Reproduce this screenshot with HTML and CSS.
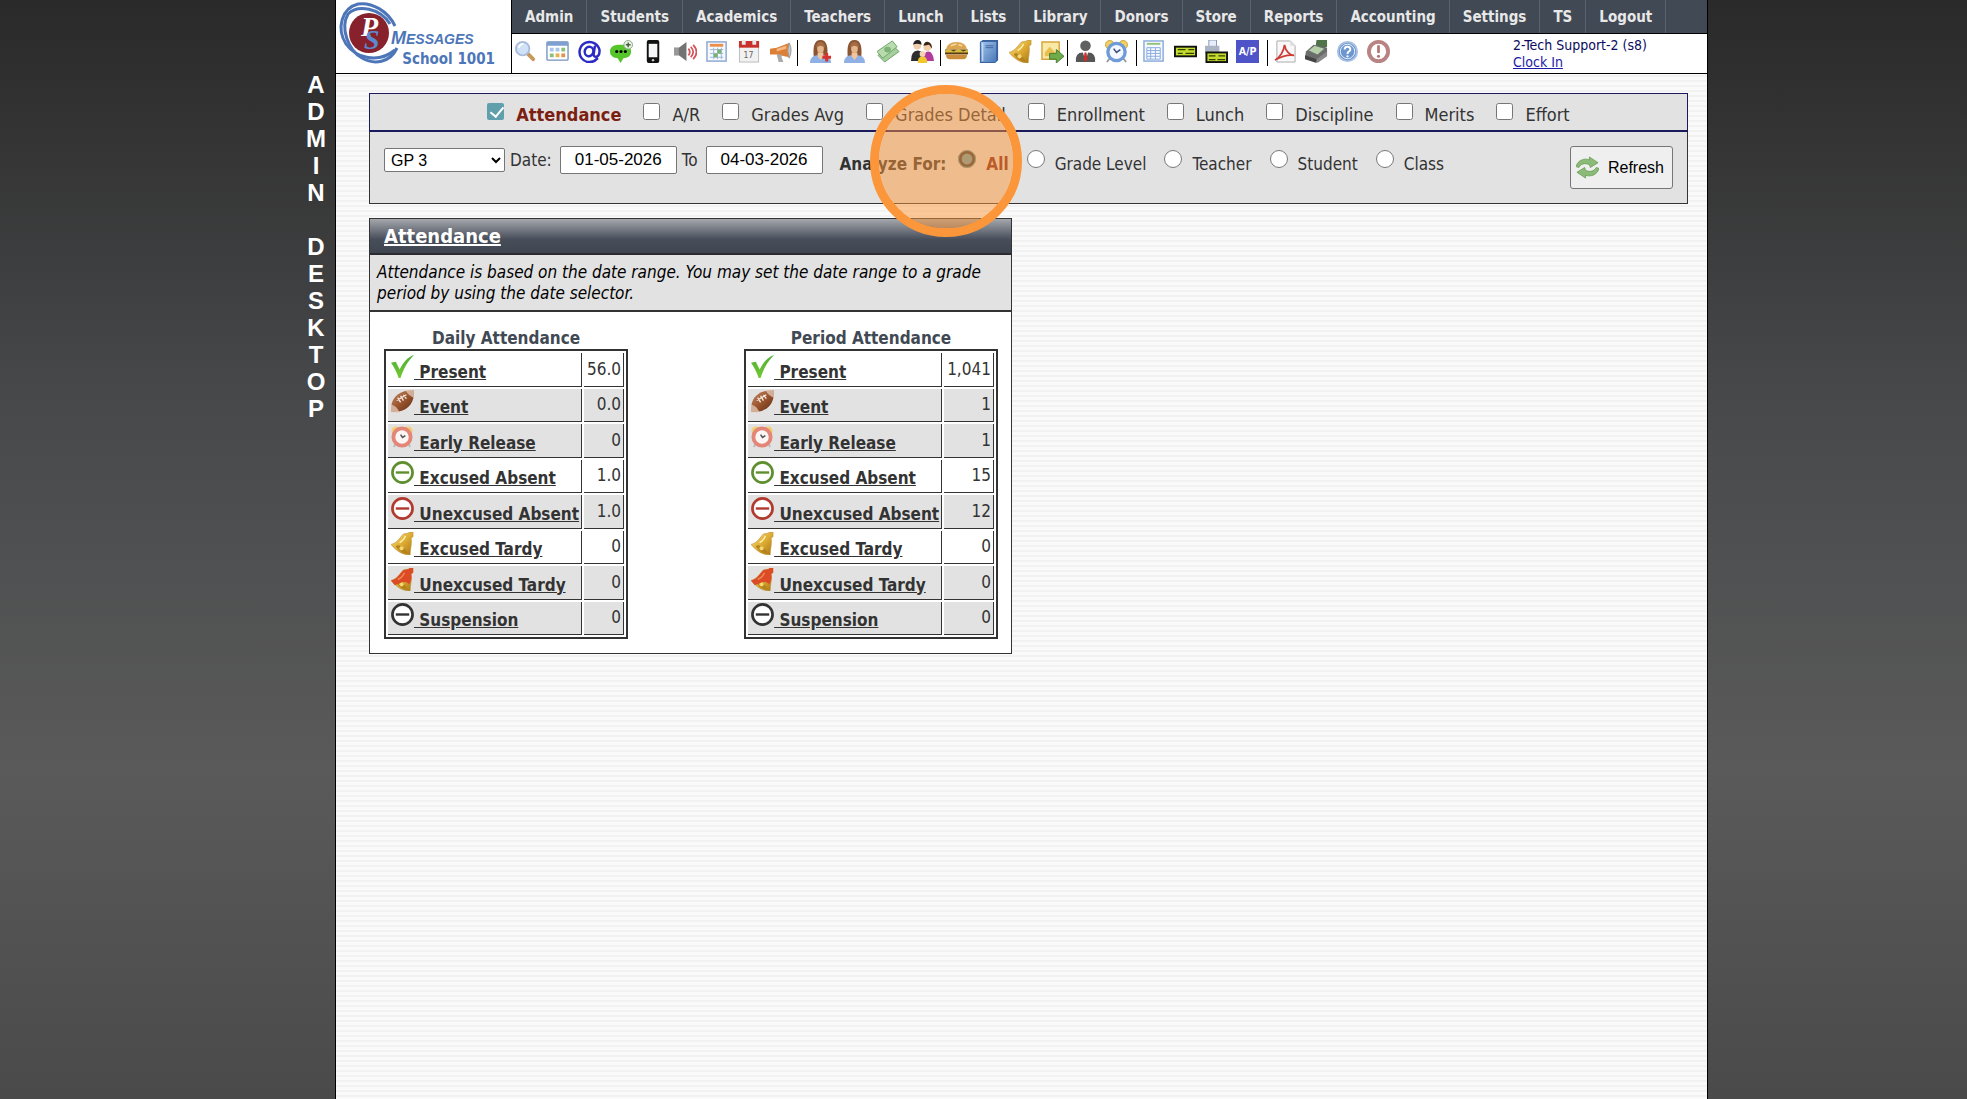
FILE: index.html
```
<!DOCTYPE html>
<html lang="en">
<head>
    <meta charset="UTF-8">
    <meta name="viewport" content="width=device-width, initial-scale=1.0">
    <title>Admin Desktop</title>
    <link rel="stylesheet" href="styles.css">
</head>
<body>
    <!-- icon sprite -->
    <svg width="0" height="0" class="sprite" aria-hidden="true">
        <defs>
            <linearGradient id="gold" x1="0" y1="0" x2="1" y2="1"><stop offset="0" stop-color="#f7e08a"/><stop offset="0.5" stop-color="#e0ae35"/><stop offset="1" stop-color="#a87512"/></linearGradient>
            <linearGradient id="blue" x1="0" y1="0" x2="1" y2="1"><stop offset="0" stop-color="#9fc3ea"/><stop offset="1" stop-color="#4a78b8"/></linearGradient>
            <linearGradient id="brown" x1="0" y1="0" x2="1" y2="1"><stop offset="0" stop-color="#c98f6c"/><stop offset="0.5" stop-color="#9a552e"/><stop offset="1" stop-color="#5e2c14"/></linearGradient>
            <linearGradient id="leaf" x1="0" y1="0" x2="0" y2="1"><stop offset="0" stop-color="#4fae35"/><stop offset="1" stop-color="#74c832"/></linearGradient>
        </defs>
        <symbol id="i-search" viewBox="0 0 24 24"><path d="M14 14l6 6" stroke="#c79a5c" stroke-width="4" stroke-linecap="round"/><circle cx="9" cy="9" r="7" fill="#cfe2f7" stroke="#a9bddb" stroke-width="2"/><path d="M5 8q1-4 5-4" stroke="#fff" stroke-width="2" fill="none"/></symbol>
        <symbol id="i-grid" viewBox="0 0 24 24"><rect x="1" y="2" width="22" height="19" rx="1" fill="#fff" stroke="#7391c0" stroke-width="1.4"/><path d="M1 2h22v4H1z" fill="#7e9fd0"/><path d="M4 8h4v4H4zM10 8h4v4h-4z" fill="#a9c6ea"/><path d="M16 8h4v4h-4zM4 14h4v4H4z" fill="#8cc07a"/><path d="M10 14h4v4h-4z" fill="#eab04f"/><path d="M16 14h4v4h-4z" fill="#e0954e"/></symbol>
        <symbol id="i-at" viewBox="0 0 24 24"><g fill="none" stroke="#2c2cc4" stroke-width="2.6" stroke-linecap="round"><path d="M20 19.500A10.500 10.500 0 1 1 22.500 11c0 5-2 6.500-4 6.500s-2.500-1.500-2-4L17.500 7"/><ellipse cx="11.500" cy="12" rx="4.500" ry="5" transform="rotate(15 11.500 12)"/></g></symbol>
        <symbol id="i-chat" viewBox="0 0 24 24"><path d="M11 5c7 0 11 2 11 7s-4 7-8 7l-3 5-3-5c-4-.5-8-2-8-7s4-7 11-7z" fill="#56c52c"/><circle cx="7" cy="12" r="1.600"/><circle cx="11.500" cy="12" r="1.600"/><circle cx="16" cy="12" r="1.600"/><circle cx="19" cy="5" r="4.500" fill="#e8f3e2" stroke="#8aa583"/><path d="M19 2.500v5M16.500 5h5" stroke="#456040" stroke-width="1.500"/></symbol>
        <symbol id="i-phone" viewBox="0 0 24 24"><rect x="5" y="0" width="13" height="24" rx="2" fill="#111"/><rect x="7" y="4" width="9" height="14" fill="#f4f6f8"/><circle cx="11.500" cy="21" r="1.300" fill="#ccc"/></symbol>
        <symbol id="i-sound" viewBox="0 0 24 24"><path d="M0 8h5l8-6v20l-8-6H0z" fill="#737373"/><path d="M0 8h5v8H0z" fill="#999"/><path d="M15 9q3 3.500 0 7M17.500 7q5 5.500 0 11M20 5q7 7.500 0 15" fill="none" stroke="#d3545a" stroke-width="1.800"/></symbol>
        <symbol id="i-cal" viewBox="0 0 24 24"><rect x="1" y="2" width="20" height="20" fill="#f6f9fd" stroke="#8aa6d2" stroke-width="1.500"/><path d="M4 4h14v3H4z" fill="#ec8d4b"/><path d="M4 10h14M4 14h14M4 18h14M8 8v12M12 8v12M16 8v12" stroke="#9db4d8"/><path d="M12 10h4v4h-4zM8 14h4v4H8z" fill="#78b56a"/></symbol>
        <symbol id="i-date" viewBox="0 0 24 24"><rect x="1.500" y="2" width="20" height="21" fill="#f1f1f1" stroke="#bbb"/><path d="M1 1h21v7H1z" fill="#c9302c"/><path d="M4 0h4v5H4zM15 0h4v5h-4z" fill="#e8e8e8"/></symbol>
        <symbol id="i-horn" viewBox="0 0 24 24"><path d="M0 9l7-1 13-5v15L7 15H0z" fill="#dc7f35"/><path d="M20 3q4 7 0 16-3-8 0-16z" fill="#c6c6c6" stroke="#999"/><path d="M7 15h6l-1 3 2 5H9z" fill="#aaa"/><path d="M7 9l10-3v3L7 12z" fill="#f4b880"/></symbol>
        <symbol id="i-girl" viewBox="0 0 24 24"><path d="M5 18C4 8 5 0 12 0s8 8 7 18z" fill="#8b5534"/><path d="M1 24q0-7 7-8h8q7 1 7 8z" fill="#8fb0e4"/><path d="M9 13h6v4l-3 4-3-4z" fill="#f0c49c"/><ellipse cx="12" cy="9" rx="3.500" ry="4.500" fill="#e3b68c"/><path d="M7 8q1-6 5-6t5 6q-4-2-5-2T7 8z" fill="#a66c44"/></symbol>
        <symbol id="i-girl-add" viewBox="0 0 24 24"><use href="#i-girl"/><path d="M18.500 13.500v9M14 18h9" stroke="#d8302a" stroke-width="3"/></symbol>
        <symbol id="i-cash" viewBox="0 0 24 24"><path d="M1 16L17 6l6 6L8 23z" fill="#a6cf9d" stroke="#6ca268"/><path d="M0 12L16 1l5 6L6 19z" fill="#b8dcae" stroke="#6ca268"/><ellipse cx="11" cy="10" rx="3.500" ry="3" fill="#7fb277"/></symbol>
        <symbol id="i-family" viewBox="0 0 24 24"><path d="M0 22q0-11 7-11t7 11z" fill="#2e2e2e"/><circle cx="6.500" cy="6" r="4" fill="#f1cda9"/><path d="M2 5q1-5 5-5t4 5q-5-2-9 0z" fill="#222"/><path d="M13 22q0-10 5-10t6 10z" fill="#b53aa0"/><circle cx="17" cy="7.500" r="4" fill="#f1cda9"/><path d="M13 6q1-5 5-4 4 1 4 7l-3-4z" fill="#3a2418"/><path d="M7 24q0-7 5-7t5 7z" fill="#f1c730"/><circle cx="12" cy="14.500" r="3" fill="#f6d5b5"/></symbol>
        <symbol id="i-burger" viewBox="0 0 24 24"><path d="M1 10q1-8 11-8t11 8z" fill="#dba54f"/><path d="M0 10h24v5H0z" fill="#5a3a16"/><path d="M0 11l4-2 5 3 5-3 5 3 5-2v3H0z" fill="#d4bb3d"/><path d="M1 15h22q0 5-4 5H5q-4 0-4-5z" fill="#c98d3c"/><path d="M6 6l6-2M14 5l4 1" stroke="#f4dba4" stroke-width="1.500"/></symbol>
        <symbol id="i-book" viewBox="0 0 24 24"><path d="M3 2l3-2h16v21l-3 3H3z" fill="#3b62a0"/><rect x="4" y="2" width="16" height="21" fill="url(#blue)"/><path d="M6 3v19" stroke="#dce9f8"/><path d="M9 6h8M9 8h8" stroke="#41679f"/></symbol>
        <symbol id="i-bell" viewBox="0 0 24 24"><path d="M0 13C7 11 9 6 13 2l6-1V0h4v5l-2 1c1 7-1 11-1 18-8 0-14-4-20-11z" fill="url(#gold)" stroke="#b98c2c" stroke-width=".6"/><path d="M5 15q2-3 7 1t6 7q-8-1-13-8z" fill="#b3831f"/><circle cx="11" cy="17" r="2.200" fill="#f5d66f"/><path d="M9 11q5-3 6-7" stroke="#fff3b5" stroke-width="1.500" fill="none"/></symbol>
        <symbol id="i-bell-red" viewBox="0 0 24 24"><use href="#i-bell"/><path d="M0 13C7 11 9 6 13 2l6-1V0h4v5l-2 1c1 5 0 8-2 11-5-5-10-1-15 1z" fill="#dc4b25"/><path d="M7 12q5-2 7-7" stroke="#f08b55" stroke-width="1.500" fill="none"/></symbol>
        <symbol id="i-export" viewBox="0 0 24 24"><path d="M1 2h18v18H1z" fill="#f8e9a6" stroke="#d5a63c" stroke-width="1.500"/><path d="M4 13l5-6 6 6v4H4z" fill="#e9bf4f"/><path d="M9 14h7v-4l8 7-8 7v-4H9z" fill="#70ac4c" stroke="#437c2c"/></symbol>
        <symbol id="i-man" viewBox="0 0 24 24"><path d="M2 23q-1-10 7-10h6q8 0 7 10z" fill="#565656"/><circle cx="12" cy="6" r="5.500" fill="#606060"/><path d="M9 12l3 10 3-10z" fill="#fff"/><path d="M11 13h2l1 7-2 3-2-3z" fill="#cf2e28"/></symbol>
        <symbol id="i-clock" viewBox="0 0 24 24"><path d="M5 19l-3 4M19 19l3 4" stroke="#999" stroke-width="2"/><circle cx="5" cy="5" r="4.500" fill="#f1cf63" stroke="#cda43b"/><circle cx="19" cy="5" r="4.500" fill="#f1cf63" stroke="#cda43b"/><circle cx="12" cy="12.500" r="9" fill="#f5f9ff" stroke="#6f9bd8" stroke-width="3.500"/><path d="M9 9l3 4 4-3" fill="none" stroke="#36507c" stroke-width="1.600"/></symbol>
        <symbol id="i-clock-red" viewBox="0 0 24 24"><path d="M5 18l-2 4M18 18l2 4" stroke="#bbb" stroke-width="2"/><circle cx="5" cy="5" r="4.500" fill="#f1cf75"/><circle cx="18" cy="5" r="4.500" fill="#f1cf75"/><circle cx="11.500" cy="11.500" r="9" fill="#fbf6f3" stroke="#e38678" stroke-width="4"/><path d="M10 9l2 3 3-2" fill="none" stroke="#555" stroke-width="1.600"/></symbol>
        <symbol id="i-sheet" viewBox="0 0 24 24"><rect x="1" y="1" width="20" height="21" fill="#f5f9ff" stroke="#8aaadc" stroke-width="1.500"/><path d="M4 4h14" stroke="#93c37b" stroke-width="2"/><path d="M4 8h14M4 11h14M4 14h14M4 17h14M4 20h14M4 8v12M8 8v12M13 8v12M18 8v12" stroke="#8aaadc"/></symbol>
        <symbol id="i-check" viewBox="0 0 24 24"><rect x="1" y="7" width="22" height="10" fill="#c3dc2e" stroke="#111" stroke-width="2"/><path d="M4 10h8M4 14h5M15 10h6M12 14h9" stroke="#384000" stroke-width="1.200"/></symbol>
        <symbol id="i-check-print" viewBox="0 0 24 24"><path d="M4 0h8v7H4z" fill="#e6eef9" stroke="#8497b3"/><path d="M0 6h15v8H0z" fill="#aab4c2"/><rect x="1.500" y="13" width="21.500" height="10" fill="#c3dc2e" stroke="#111" stroke-width="2"/><path d="M4 16.500h7M4 20.500h7M14 16.500h7M13 20.500h8" stroke="#384000" stroke-width="1.200"/></symbol>
        <symbol id="i-pdf" viewBox="0 0 24 24"><path d="M3 1h14l5 5v17H3z" fill="#f8f8f8" stroke="#aaa"/><path d="M17 1v5h5z" fill="#ddd"/><path d="M1 21c5-3 9-9 10-16 1 7 6 11 10 11-7-1-13 1-20 5z" fill="none" stroke="#cd3c34" stroke-width="1.800"/></symbol>
        <symbol id="i-register" viewBox="0 0 24 24"><path d="M12 0h11v7l-4 2-8-2z" fill="#50734a"/><path d="M1 12L9 5l14 3v7l-10 8-13-5z" fill="#6a6d6c"/><path d="M4 11l6-5 10 3-7 6z" fill="#b8d0a9"/><path d="M0 16l12 4v4L0 20z" fill="#444"/><path d="M12 20l11-8v5l-10 7z" fill="#888"/></symbol>
        <symbol id="i-help" viewBox="0 0 24 24"><circle cx="12" cy="12" r="10" fill="#6d96cf" stroke="#a6bfe2" stroke-width="2"/><circle cx="12" cy="12" r="7.500" fill="none" stroke="#eef4fc"/><path d="M9 10q0-3 3-3t3 3q0 1.500-2 2.500-1 .5-1 2" fill="none" stroke="#fff" stroke-width="2"/><circle cx="12" cy="17" r="1.200" fill="#fff"/></symbol>
        <symbol id="i-alert" viewBox="0 0 24 24"><circle cx="12" cy="12" r="10" fill="#fff" stroke="#b98384" stroke-width="4"/><path d="M12 5.500v8" stroke="#b07475" stroke-width="2.800"/><circle cx="12" cy="17" r="1.600" fill="#b07475"/></symbol>
        <symbol id="i-tick" viewBox="0 0 24 24"><path d="M0 8l5-1 4 8C13 7 18 2 24 0 18 6 13 14 10 24H8C6 18 3 12 0 8z" fill="url(#leaf)"/></symbol>
        <symbol id="i-football" viewBox="0 0 24 24"><path d="M0 23C-1 9 7 0 24 0c1 14-7 24-24 23z" fill="url(#brown)"/><path d="M0 15q7 2 9 9H0zM15 0q3 6 9 8V0z" fill="#e9d4c6" opacity=".7"/><path d="M6 11L16 5M7 8l3 5M10 6l3 5M13 5l3 4" stroke="#f5e9df" stroke-width="1.400"/></symbol>
        <symbol id="i-minus" viewBox="0 0 24 24"><circle cx="12" cy="12" r="10.500" fill="#fff" stroke="currentColor" stroke-width="2.800"/><path d="M5 12h14" stroke="currentColor" stroke-width="2.500"/></symbol>
        <symbol id="i-refresh" viewBox="0 0 24 24"><path id="arrow" d="M0 11C2 4 9 2 14 4V1l9 6-8 5-1-3C9 7 5 8 3 12z" fill="#8cba78" stroke="#659b51" stroke-width=".8"/><use href="#arrow" transform="rotate(180 12 12)"/></symbol>
    </svg>

    <div class="wrapper">
        <div class="side-title">A
            D
            M
            I
            N

            D
            E
            S
            K
            T
            O
            P</div>
        <main class="desktop">
            <header class="header">
                <div class="logo">
                    <svg class="logo-mark" viewBox="0 0 145 70" aria-hidden="true">
                        <g fill="none" stroke="#4d76b8">
                            <path d="M59 26C52 11 36 2 22 4 6 8 0 28 10 44c10 14 32 20 49 6" stroke-width="3"/>
                            <path d="M54 24C44 8 22 4 12 14 4 28 12 50 26 58c12 7 28 5 35-10" stroke-width="3"/>
                        </g>
                        <circle cx="33" cy="33" r="20" fill="#87212b"/>
                        <text x="25" y="36" class="logo-p">P</text>
                        <text x="28" y="49" class="logo-s">S</text>
                        <text x="55" y="44" class="logo-text">M<tspan class="logo-small">ESSAGES</tspan></text>
                    </svg>
                    <div class="school">School 1001</div>
                </div>
                <div class="header-right">
                    <nav class="menu">
                        <a href="#">Admin</a>
                        <a href="#">Students</a>
                        <a href="#">Academics</a>
                        <a href="#">Teachers</a>
                        <a href="#">Lunch</a>
                        <a href="#">Lists</a>
                        <a href="#">Library</a>
                        <a href="#">Donors</a>
                        <a href="#">Store</a>
                        <a href="#">Reports</a>
                        <a href="#">Accounting</a>
                        <a href="#">Settings</a>
                        <a href="#">TS</a>
                        <a href="#">Logout</a>
                    </nav>
                    <div class="toolbar">
                        <div class="icons icons-first">
                            <a href="#" aria-label="Search"><svg class="icon"><use href="#i-search"/></svg></a>
                            <a href="#" aria-label="Schedule"><svg class="icon"><use href="#i-grid"/></svg></a>
                            <a href="#" aria-label="Email"><svg class="icon"><use href="#i-at"/></svg></a>
                            <a href="#" aria-label="Text message"><svg class="icon"><use href="#i-chat"/></svg></a>
                            <a href="#" aria-label="Phone"><svg class="icon"><use href="#i-phone"/></svg></a>
                            <a href="#" aria-label="Voice"><svg class="icon"><use href="#i-sound"/></svg></a>
                            <a href="#" aria-label="Calendar"><svg class="icon"><use href="#i-cal"/></svg></a>
                            <a href="#" aria-label="Date"><svg class="icon" viewBox="0 0 24 24"><use href="#i-date"/><text x="11" y="19" text-anchor="middle" class="i-num">17</text></svg></a>
                            <a href="#" aria-label="Announcements"><svg class="icon"><use href="#i-horn"/></svg></a>
                        </div>
                        <div class="icons icons-people">
                            <a href="#" aria-label="Add student"><svg class="icon"><use href="#i-girl-add"/></svg></a>
                            <a href="#" aria-label="Student"><svg class="icon"><use href="#i-girl"/></svg></a>
                            <a href="#" aria-label="Payments"><svg class="icon"><use href="#i-cash"/></svg></a>
                            <a href="#" aria-label="Family"><svg class="icon"><use href="#i-family"/></svg></a>
                        </div>
                        <div class="icons icons-daily">
                            <a href="#" aria-label="Lunch"><svg class="icon"><use href="#i-burger"/></svg></a>
                            <a href="#" aria-label="Gradebook"><svg class="icon"><use href="#i-book"/></svg></a>
                            <a href="#" aria-label="Attendance"><svg class="icon"><use href="#i-bell"/></svg></a>
                            <a href="#" aria-label="Export"><svg class="icon"><use href="#i-export"/></svg></a>
                        </div>
                        <div class="icons">
                            <a href="#" aria-label="Staff"><svg class="icon"><use href="#i-man"/></svg></a>
                            <a href="#" aria-label="Time clock"><svg class="icon"><use href="#i-clock"/></svg></a>
                        </div>
                        <div class="icons">
                            <a href="#" aria-label="Ledger"><svg class="icon"><use href="#i-sheet"/></svg></a>
                            <a href="#" aria-label="Checks"><svg class="icon"><use href="#i-check"/></svg></a>
                            <a href="#" aria-label="Print checks"><svg class="icon"><use href="#i-check-print"/></svg></a>
                            <a href="#" aria-label="Accounts payable"><svg class="icon" viewBox="0 0 24 24"><rect width="24" height="24" fill="#4e54c8"/><text x="12" y="16" text-anchor="middle" class="i-ap-text">A/P</text></svg></a>
                        </div>
                        <div class="icons">
                            <a href="#" aria-label="PDF"><svg class="icon"><use href="#i-pdf"/></svg></a>
                            <a href="#" aria-label="Register"><svg class="icon"><use href="#i-register"/></svg></a>
                            <a href="#" aria-label="Help"><svg class="icon"><use href="#i-help"/></svg></a>
                            <a href="#" aria-label="Alerts"><svg class="icon"><use href="#i-alert"/></svg></a>
                        </div>
                        <div class="user">
                            2-Tech Support-2 (s8)<br>
                            <a href="#">Clock In</a>
                        </div>
                    </div>
                </div>
            </header>

            <form class="filters">
                <div class="checks">
                    <label class="selected"><input type="checkbox" checked>Attendance</label>
                    <label><input type="checkbox">A/R</label>
                    <label><input type="checkbox">Grades Avg</label>
                    <label><input type="checkbox">Grades Detail</label>
                    <label><input type="checkbox">Enrollment</label>
                    <label><input type="checkbox">Lunch</label>
                    <label><input type="checkbox">Discipline</label>
                    <label><input type="checkbox">Merits</label>
                    <label><input type="checkbox">Effort</label>
                </div>
                <div class="options">
                    <div class="dates">
                        <select aria-label="Grade period"><option>GP 3</option></select>
                        <label for="from">Date:</label>
                        <input type="text" id="from" value="01-05-2026">
                        <label for="to">To</label>
                        <input type="text" id="to" value="04-03-2026">
                    </div>
                    <div class="analyze">
                        <b>Analyze For:</b>
                        <label class="selected"><input type="radio" name="analyze" checked>All<span class="highlight"></span></label>
                        <label><input type="radio" name="analyze">Grade Level</label>
                        <label><input type="radio" name="analyze">Teacher</label>
                        <label><input type="radio" name="analyze">Student</label>
                        <label><input type="radio" name="analyze">Class</label>
                    </div>
                    <button type="button" class="refresh"><svg class="icon"><use href="#i-refresh"/></svg>Refresh</button>
                </div>
            </form>

            <section class="panel">
                <h2><a href="#">Attendance</a></h2>
                <p>Attendance is based on the date range. You may set the date range to a grade period by using the date selector.</p>
                <div class="tables">
                    <table>
                        <caption>Daily Attendance</caption>
                        <tr><td><svg class="icon"><use href="#i-tick"/></svg><a href="#">&nbsp;Present</a></td><td>56.0</td></tr>
                        <tr class="shade"><td><svg class="icon"><use href="#i-football"/></svg><a href="#">&nbsp;Event</a></td><td>0.0</td></tr>
                        <tr class="shade"><td><svg class="icon"><use href="#i-clock-red"/></svg><a href="#">&nbsp;Early Release</a></td><td>0</td></tr>
                        <tr><td><svg class="icon green"><use href="#i-minus"/></svg><a href="#">&nbsp;Excused Absent</a></td><td>1.0</td></tr>
                        <tr class="shade"><td><svg class="icon red"><use href="#i-minus"/></svg><a href="#">&nbsp;Unexcused Absent</a></td><td>1.0</td></tr>
                        <tr><td><svg class="icon"><use href="#i-bell"/></svg><a href="#">&nbsp;Excused Tardy</a></td><td>0</td></tr>
                        <tr class="shade"><td><svg class="icon"><use href="#i-bell-red"/></svg><a href="#">&nbsp;Unexcused Tardy</a></td><td>0</td></tr>
                        <tr class="shade"><td><svg class="icon"><use href="#i-minus"/></svg><a href="#">&nbsp;Suspension</a></td><td>0</td></tr>
                    </table>
                    <table>
                        <caption>Period Attendance</caption>
                        <tr><td><svg class="icon"><use href="#i-tick"/></svg><a href="#">&nbsp;Present</a></td><td>1,041</td></tr>
                        <tr class="shade"><td><svg class="icon"><use href="#i-football"/></svg><a href="#">&nbsp;Event</a></td><td>1</td></tr>
                        <tr class="shade"><td><svg class="icon"><use href="#i-clock-red"/></svg><a href="#">&nbsp;Early Release</a></td><td>1</td></tr>
                        <tr><td><svg class="icon green"><use href="#i-minus"/></svg><a href="#">&nbsp;Excused Absent</a></td><td>15</td></tr>
                        <tr class="shade"><td><svg class="icon red"><use href="#i-minus"/></svg><a href="#">&nbsp;Unexcused Absent</a></td><td>12</td></tr>
                        <tr><td><svg class="icon"><use href="#i-bell"/></svg><a href="#">&nbsp;Excused Tardy</a></td><td>0</td></tr>
                        <tr class="shade"><td><svg class="icon"><use href="#i-bell-red"/></svg><a href="#">&nbsp;Unexcused Tardy</a></td><td>0</td></tr>
                        <tr class="shade"><td><svg class="icon"><use href="#i-minus"/></svg><a href="#">&nbsp;Suspension</a></td><td>0</td></tr>
                    </table>
                </div>
            </section>
        </main>
    </div>
</body>
</html>
```
FILE: styles.css
```
* { box-sizing: border-box; }
body {
    margin: 0;
    min-height: 100vh;
    background: linear-gradient(#2a2a2a 0, #303030 8%, #48494b 37%, #5a5a5a 70%, #4a4a4a 100%);
    font-family: Tahoma, "DejaVu Sans Condensed", "DejaVu Sans", sans-serif;
    font-size: 17px;
    color: #333;
}
.sprite { position: absolute; }
.icon { width: 23px; height: 23px; }
.wrapper {
    display: flex;
    max-width: 1449px;
    min-height: 100vh;
    margin: 0 auto;
}
.side-title {
    width: 76px;
    padding: 71px 0 0 38px;
    text-align: center;
    white-space: pre-line;
    font: bold 24px/27px "Liberation Sans", Arial, sans-serif;
    color: #fff;
}
.desktop {
    flex: 1;
    border: 1px solid #000;
    border-width: 0 1px;
    background: repeating-linear-gradient(#f2f2f2 0 2px, #fafafa 2px 5px);
}

/* header */
.header {
    display: flex;
    height: 74px;
    background: #fff;
    border-bottom: 1px solid #000;
}
.logo {
    width: 176px;
    border-right: 1px solid #000;
    position: relative;
}
.logo-mark { display: block; width: 145px; height: 70px; }
.logo-p { font: italic bold 28px "Liberation Serif", serif; fill: #fff; }
.logo-s { font: italic bold 28px "Liberation Serif", serif; fill: #5b8ad0; }
.logo-text { font: italic bold 18px "Liberation Sans", sans-serif; fill: #4d76b8; }
.logo-small { font-size: 14px; }
.school {
    position: absolute;
    right: 16px;
    bottom: 5px;
    font-size: 15px;
    font-weight: bold;
    color: #4d76b8;
}
.header-right { flex: 1; }
.menu {
    display: flex;
    height: 34px;
    background: #414954;
    border-bottom: 1px solid #000;
}
.menu a {
    padding: 1px 13px 0;
    border-right: 1px solid #5b626d;
    font-size: 15px;
    line-height: 32px;
    font-weight: bold;
    color: #e8e8e8;
    text-decoration: none;
}
.toolbar {
    display: flex;
    align-items: flex-start;
    padding: 6px 0 0 2px;
}
.icons {
    display: flex;
    gap: 8px;
    height: 26px;
    padding: 0 8px 0 6px;
    border-left: 1px solid #000;
}
.icons-first { gap: 9px; padding: 0 4px 0 0; border: none; }
.icons-people { gap: 11px; padding: 0 6px 0 11px; }
.icons-daily { gap: 9px; padding: 0 3px 0 4px; }
.icons .icon { display: block; }
.i-num { font: 9px "DejaVu Sans Condensed", sans-serif; fill: #666; }
.i-ap-text { font: bold 11px "DejaVu Sans Condensed", sans-serif; fill: #fff; }
.user {
    width: 194px;
    margin: -3px 0 0 auto;
    font-size: 14px;
    line-height: 17px;
    color: #0b0b60;
}
.user a { color: #1c1ca8; }

/* filters */
.filters {
    margin: 19px 19px 14px 33px;
    background: #e2e2e2;
    border: 1px solid #333;
    border-top: none;
}
.checks {
    display: flex;
    justify-content: center;
    gap: 22px;
    height: 39px;
    margin: 0 -1px;
    padding-top: 9px;
    border: 1px solid #1a1a5c;
    border-bottom-width: 2px;
    font-size: 18px;
}
.checks label, .analyze label {
    display: flex;
    line-height: 24px;
    position: relative;
}
.checks input, .analyze input {
    width: 17px;
    height: 17px;
    margin: 0 12px 0 0;
    accent-color: #60a0ac;
}
.checks input:checked {
    appearance: none;
    border-radius: 2px;
    background: #60a0ac;
}
.checks input:checked::after {
    content: "";
    display: block;
    width: 6px;
    height: 11px;
    margin: 1px 0 0 6px;
    border: solid #fff;
    border-width: 0 2px 2px 0;
    transform: rotate(40deg);
}
.selected { font-weight: bold; color: #7b2010; }
.options {
    display: flex;
    align-items: flex-start;
    height: 71px;
    padding: 14px 14px 0;
}
.dates { display: flex; align-items: center; }
.dates label { margin: 0 8px 0 5px; }
.dates select, .dates input {
    border: 1px solid #767676;
    border-radius: 2px;
    background: #fff;
    color: #000;
    font: 16px "Liberation Sans", Arial, sans-serif;
}
.dates select { width: 121px; height: 24px; padding: 0 2px; }
.dates input { width: 117px; height: 28px; font-size: 17px; text-align: center; }
.analyze {
    display: flex;
    gap: 18px;
    margin: 4px 0 0 17px;
}
.analyze b { margin-right: -6px; }
.analyze b, .analyze label { line-height: 28px; }
.analyze input { width: 18px; height: 18px; margin-right: 10px; }
.highlight {
    position: absolute;
    left: -88px;
    top: -65px;
    width: 152px;
    height: 152px;
    border: 9px solid #fb963a;
    border-radius: 50%;
    background: rgba(251, 150, 58, 0.5);
    background-clip: padding-box;
    pointer-events: none;
}
.refresh {
    display: flex;
    align-items: center;
    gap: 9px;
    height: 43px;
    margin-left: auto;
    padding: 0 8px 0 5px;
    border: 1px solid #767676;
    border-radius: 3px;
    background: #efefef;
    font: 16px "Liberation Sans", Arial, sans-serif;
    color: #000;
}

/* attendance panel */
.panel {
    width: 643px;
    margin-left: 33px;
    border: 1px solid #333;
    background: #fff;
}
.panel h2 {
    margin: 0;
    padding: 0 14px;
    border-bottom: 2px solid #2b2b30;
    background: linear-gradient(#a4a7ac, #474e5a 60%, #3f4652);
    font-size: 20px;
    line-height: 34px;
}
.panel h2 a { color: #fff; }
.panel p {
    margin: 0;
    padding: 7px 7px 6px;
    border-bottom: 2px solid #333;
    background: #e2e2e2;
    line-height: 21px;
    font-style: italic;
    color: #000;
}
.tables {
    display: flex;
    gap: 116px;
    padding: 15px 14px 14px;
}
table {
    border: 2px solid #333;
    border-spacing: 2px;
}
caption {
    line-height: 22px;
    font-weight: bold;
    color: #414954;
}
td {
    height: 34px;
    padding: 0 2px 2px 3px;
    border: 1px solid #333;
    border-width: 0 1px 1px 0;
    line-height: 22px;
    text-align: right;
    white-space: nowrap;
}
tr:nth-child(even) td { height: 33px; }
td:first-child { text-align: left; font-weight: bold; }
td a { color: #333; }
.shade td { background: #e2e2e2; }
.green { color: #5e8f2e; }
.red { color: #b03a2e; }
```
